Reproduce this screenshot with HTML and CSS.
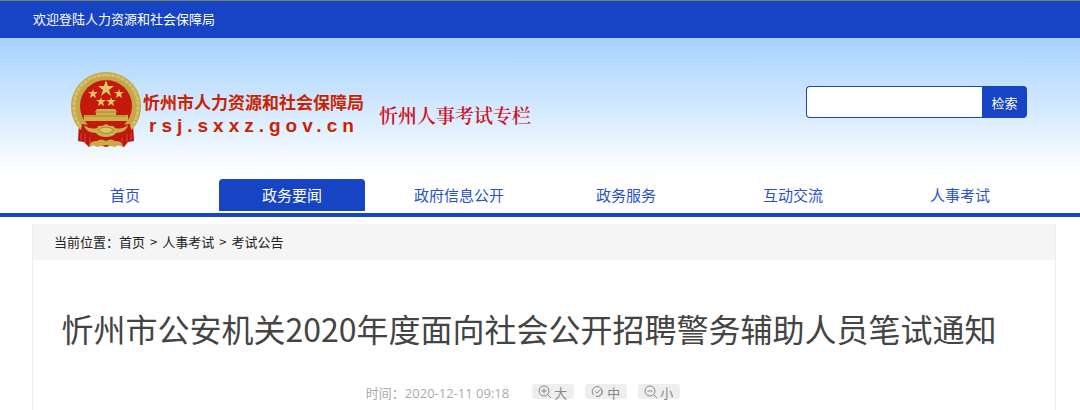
FILE: index.html
```html
<!DOCTYPE html>
<html lang="zh-CN">
<head>
    <meta charset="UTF-8">
    <meta name="viewport" content="width=device-width, initial-scale=1.0">
    <title>忻州市公安机关2020年度面向社会公开招聘警务辅助人员笔试通知</title>
    <link rel="stylesheet" href="styles.css">
</head>
<body>
    <div class="topbar">
        <div class="wrap">欢迎登陆人力资源和社会保障局</div>
    </div>

    <header class="header">
        <div class="banner">
            <a class="logo" href="#">
                <svg class="emblem" viewBox="0 0 72 78" width="72" height="78" aria-hidden="true">
                    <!-- ribbon -->
                    <path d="M9 52 L8 70 L14 71 L19 76 L25 73 L36 76 L47 73 L54 76 L58 71 L64 70 L63 52 Z" fill="#b8170f"/>
                    <path d="M11 61v8M15 61v11M20 64v10M52 64v10M57 61v11M61 61v8" stroke="#e04a2c" stroke-width="1"/>
                    <!-- wheat ring -->
                    <path d="M36 1 C17 1 1 16 1 35 C1 47 6 56 14 62 L58 62 C66 56 71 47 71 35 C71 16 55 1 36 1 Z" fill="#c4a748"/>
                    <path d="M36 4 C18 4 4 17 4 35 C4 46 8 54 14 59 M36 4 C54 4 68 17 68 35 C68 46 64 54 58 59" fill="none" stroke="#d6c068" stroke-width="3" stroke-dasharray="4 1"/>
                    <!-- red field -->
                    <circle cx="36" cy="35" r="26" fill="#c5180e"/>
                    <path d="M12 53 Q36 57 60 53 L62 63 Q54 62 51 68 L36 71 L21 68 Q18 62 10 63 Z" fill="#c01a10"/>
                    <g fill="#dfc660">
                        <path d="M36 9l2 6h6l-5 4 2 6-5-4-5 4 2-6-5-4h6z"/>
                        <path d="M23 18l1 3h4l-3 2 1 4-3-2-3 2 1-4-3-2h4z"/>
                        <path d="M49 18l1 3h4l-3 2 1 4-3-2-3 2 1-4-3-2h4z"/>
                        <path d="M31 26l1 3h4l-3 2 1 4-3-2-3 2 1-4-3-2h4z"/>
                        <path d="M41 26l1 3h4l-3 2 1 4-3-2-3 2 1-4-3-2h4z"/>
                    </g>
                    <!-- gate -->
                    <path d="M27 38h18l2 3h-1v3h12v6H14v-6h12v-3h-1z" fill="#cdb04c"/>
                    <path d="M25 41h22M15 45h42" stroke="#a98a30" stroke-width="1"/>
                    <!-- gear and knots -->
                    <path d="M14 54 Q20 59 27 57 Q28 54 32 55 L36 53 L40 55 Q44 54 45 57 Q52 59 58 54 Q57 61 46 62 Q43 66 36 66 Q29 66 26 62 Q15 61 14 54Z" fill="#cbb04c"/>
                    <path d="M28 59 Q36 53 44 59 Q36 66 28 59Z" fill="#ddc666" stroke="#a58a35"/>
                    <path d="M19 76 Q20 69 27 70 Q31 67 36 70 Q41 67 45 70 Q52 69 53 76 Q48 73 45 76 L36 74 L27 76 Q24 73 19 76Z" fill="#c9ac48"/>
                </svg>
                <span class="logo-text">
                    <strong class="site-name">忻州市人力资源和社会保障局</strong>
                    <span class="site-url">rsj.sxxz.gov.cn</span>
                </span>
            </a>
            <span class="column-name">忻州人事考试专栏</span>
            <form class="search">
                <input type="text" name="q" aria-label="检索">
                <button type="submit">检索</button>
            </form>
        </div>

        <nav class="nav">
            <a href="#">首页</a>
            <a href="#" class="active">政务要闻</a>
            <a href="#">政府信息公开</a>
            <a href="#">政务服务</a>
            <a href="#">互动交流</a>
            <a href="#">人事考试</a>
        </nav>
    </header>

    <main class="content">
        <div class="breadcrumb">
            <span>当前位置：</span><a href="#">首页</a><i>&gt;</i><a href="#">人事考试</a><i>&gt;</i><a href="#">考试公告</a>
        </div>
        <div class="article">
            <h1>忻州市公安机关2020年度面向社会公开招聘警务辅助人员笔试通知</h1>
            <div class="meta">
                <span class="time">时间：<time>2020-12-11 09:18</time></span>
                <button type="button">
                    <svg viewBox="0 0 14 14" width="14" height="14"><circle cx="6" cy="6" r="5"/><path d="M9.6 9.6L13 13M3.5 6h5M6 3.5v5"/></svg>
                    <span>大</span>
                </button>
                <button type="button">
                    <svg viewBox="0 0 14 14" width="14" height="14"><path d="M2.6 10A5 5 0 1 1 5 11.4M7.5 11.2A5 5 0 0 0 11 5.5M4 6.2l2 2 3.6-3.8"/></svg>
                    <span>中</span>
                </button>
                <button type="button">
                    <svg viewBox="0 0 14 14" width="14" height="14"><circle cx="6" cy="6" r="5"/><path d="M9.6 9.6L13 13M3.5 6h5"/></svg>
                    <span>小</span>
                </button>
            </div>
        </div>
    </main>
</body>
</html>
```
FILE: styles.css
```css
* {
    box-sizing: border-box;
}

body {
    margin: 0;
    background: #fff;
    color: #222;
    font-family: "Noto Sans CJK SC", sans-serif;
    font-size: 13px;
}

a {
    color: inherit;
    text-decoration: none;
}

.topbar {
    height: 38px;
    border-top: 1px solid #75845c;
    background: #1743c5;
    color: #fff;
    line-height: 36px;
}

.wrap {
    margin: 0 33px;
}

.header {
    border-bottom: 4px solid #1743c5;
    background: linear-gradient(#a6d2ff, #fff 136px);
}

.banner {
    display: flex;
    align-items: flex-start;
    height: 141px;
    padding: 33px 53px 0 70px;
}

.logo {
    display: flex;
    color: #cc2200;
}

.emblem {
    display: block;
}

.logo-text {
    display: flex;
    flex-direction: column;
    padding-top: 19px;
}

.site-name {
    font-size: 17px;
    line-height: 24px;
    margin-left: 1px;
}

.site-url {
    margin-left: 7px;
    font-family: "Liberation Sans", Arial, sans-serif;
    font-size: 19px;
    font-weight: bold;
    letter-spacing: 5px;
    line-height: 24px;
}

.column-name {
    margin: 32px 0 0 15px;
    color: #d01020;
    font-family: "Noto Serif CJK SC", "Noto Sans CJK SC", serif;
    font-size: 19px;
    font-weight: 600;
    line-height: 24px;
}

.search {
    display: flex;
    width: 221px;
    height: 32px;
    margin: 15px 0 0 auto;
}

.search input {
    flex: 1;
    min-width: 0;
    padding: 0 8px;
    border: 1px solid #1743c5;
    border-right: 0;
    border-radius: 4px 0 0 4px;
    background: #fff;
}

.search button {
    width: 45px;
    padding: 0;
    border: 0;
    border-radius: 0 4px 4px 0;
    background: #1743c5;
    color: #fff;
    font: inherit;
}

.nav {
    display: grid;
    grid-template-columns: repeat(6, 1fr);
    column-gap: 21px;
    padding: 0 47px 2px 52px;
}

.nav a {
    height: 32px;
    border-radius: 4px 4px 0 0;
    color: #2a52cc;
    font-size: 15px;
    line-height: 32px;
    text-align: center;
}

.nav .active {
    background: #1743c5;
    color: #fff;
}

.content {
    margin: 7px 24px 0 32px;
    border: 1px solid #eee;
    border-width: 0 1px;
}

.breadcrumb {
    display: flex;
    height: 36px;
    padding-left: 21px;
    background: #f5f5f5;
    line-height: 36px;
}

.breadcrumb i {
    margin: 0 5px;
    font-style: normal;
}

.article {
    padding-right: 30px;
}

h1 {
    margin: 44px 0 0;
    color: #444;
    font-size: 32px;
    font-weight: normal;
    line-height: 48px;
    text-align: center;
    white-space: nowrap;
}

.meta {
    display: flex;
    justify-content: center;
    align-items: flex-start;
    gap: 11px;
    padding: 32px 12px 11px 0;
    color: #aaa;
}

.time {
    margin-right: 12px;
    line-height: 18px;
}

.time time {
    font-family: "Open Sans", sans-serif;
}

.meta button {
    display: flex;
    gap: 2px;
    width: 42px;
    height: 15px;
    padding: 0 0 0 6px;
    border: 0;
    border-radius: 3px;
    background: #eee;
    color: #888;
    font: inherit;
    line-height: 18px;
}

.meta svg {
    flex: none;
    margin-top: 1px;
    fill: none;
    stroke: #888;
}
```
